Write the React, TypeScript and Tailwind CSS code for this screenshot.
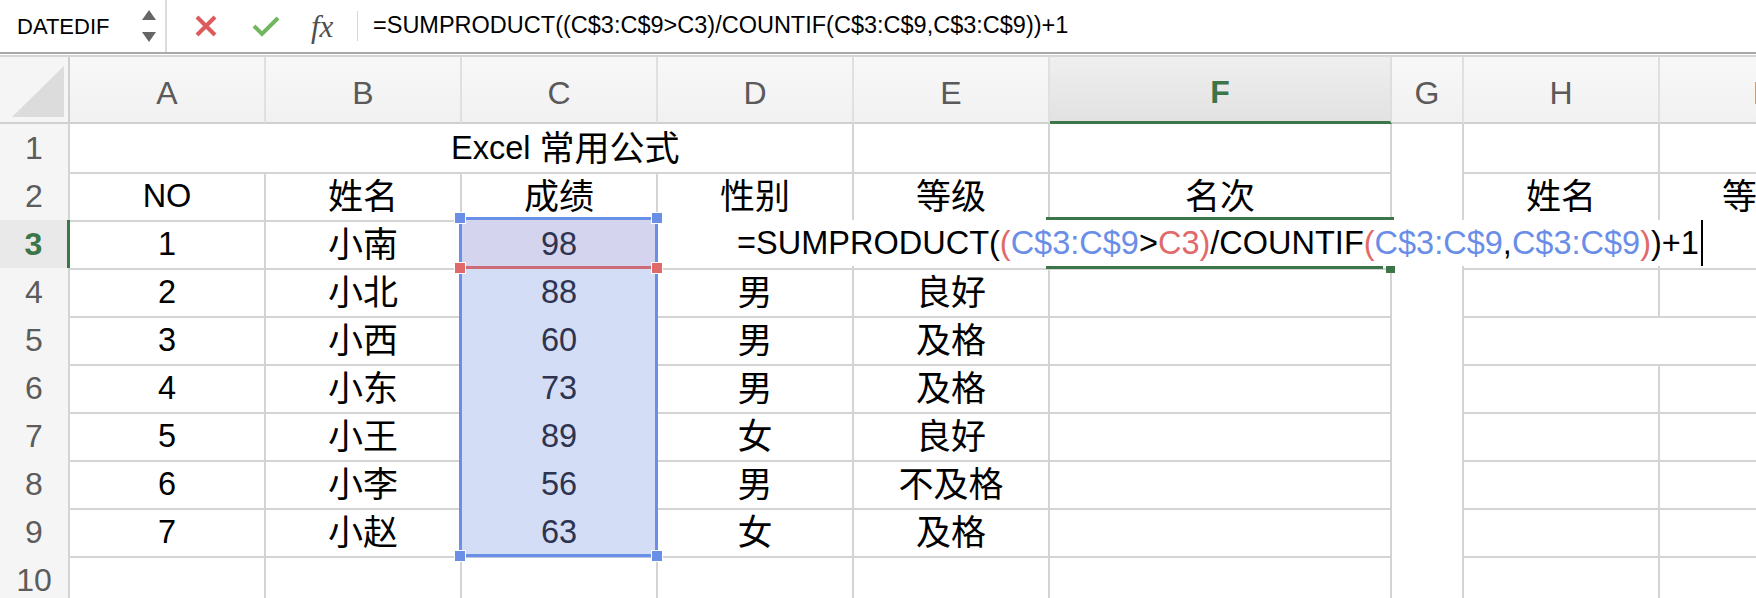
import React from 'react';

const FONT = "font-['Liberation_Sans','Noto_Sans_CJK_SC',sans-serif]";
const GRID =
  'grid grid-cols-[70px_196px_196px_196px_196px_196px_342px_72px_196px_196px]';

const isCJK = (s: string) => /[\u4e00-\u9fff]/.test(s);

function Txt({ s }: { s: string }) {
  return (
    <span className={`${isCJK(s) ? 'text-[35px]' : 'text-[32.5px]'} leading-none`}>
      {s}
    </span>
  );
}

interface CellProps {
  children?: React.ReactNode;
  noBottom?: boolean;
  sel?: 'first' | 'rest';
  span?: string;
  className?: string;
}

// one cell of the sheet; gridlines are the right/bottom borders
function Cell({ children, noBottom, sel, span = '', className = '' }: CellProps) {
  const tone = sel
    ? `${sel === 'first' ? 'bg-[#d5d4ee]' : 'bg-[#d4ddf6]'} border-[#b9c4de] text-[#2e3450]`
    : 'border-[#d4d4d4] text-black';
  return (
    <div
      className={`flex items-center overflow-hidden whitespace-nowrap border-r-2 ${
        noBottom ? '' : 'border-b-2'
      } ${tone} ${span} ${className || 'justify-center'}`}
    >
      {children}
    </div>
  );
}

function RowHead({ n, active }: { n: number; active?: boolean }) {
  return active ? (
    <div className="flex items-center justify-center border-b-2 border-r-[3px] border-b-[#d4d4d4] border-r-[#3b7548] bg-[#e9e9e9] text-[32px] font-bold text-[#3b7548]">
      {n}
    </div>
  ) : (
    <div className="flex items-center justify-center border-b-2 border-r-2 border-[#d4d4d4] bg-[#f5f5f5] text-[32px] text-[#5c5c5c]">
      {n}
    </div>
  );
}

const data = [
  ['2', '小北', '88', '男', '良好'],
  ['3', '小西', '60', '男', '及格'],
  ['4', '小东', '73', '男', '及格'],
  ['5', '小王', '89', '女', '良好'],
  ['6', '小李', '56', '男', '不及格'],
  ['7', '小赵', '63', '女', '及格'],
];

const formula: [string, 'k' | 'r' | 'b'][] = [
  ['=SUMPRODUCT(', 'k'],
  ['(', 'r'],
  ['C$3:C$9', 'b'],
  ['>', 'k'],
  ['C3', 'r'],
  [')', 'r'],
  ['/COUNTIF', 'k'],
  ['(', 'r'],
  ['C$3:C$9', 'b'],
  [',', 'k'],
  ['C$3:C$9', 'b'],
  [')', 'r'],
  [')+1', 'k'],
];

const tokenColor = { k: 'text-black', r: 'text-[#e06a6a]', b: 'text-[#6a8ee8]' };

function FormulaBar() {
  return (
    <div className="flex h-[52px] items-center bg-white">
      <div className="flex h-full w-[167px] items-center border-r-2 border-[#dcdcdc] pl-[17px] pr-[9px]">
        <span className="flex-1 text-[22px] text-black">DATEDIF</span>
        <svg width="14" height="34" viewBox="0 0 14 34">
          <polygon points="0,11 7,1 14,11" fill="#666" />
          <polygon points="0,23 14,23 7,33" fill="#666" />
        </svg>
      </div>
      <svg className="ml-[28px]" width="22" height="22" viewBox="0 0 22 22">
        <path d="M2 2 L20 20 M20 2 L2 20" stroke="#dc5b5b" strokeWidth="4" />
      </svg>
      <svg className="ml-[35px]" width="28" height="22" viewBox="0 0 28 22">
        <path d="M2 11 L10 19 L26 3" stroke="#72b65f" strokeWidth="4" fill="none" />
      </svg>
      <span className="ml-[31px] w-[30px] font-['Liberation_Serif',serif] text-[31px] italic leading-none text-[#4f4f4f]">
        fx
      </span>
      <div className="ml-[16px] h-[30px] w-px bg-[#d6d6d6]" />
      <span className="ml-[15px] text-[23.5px] text-black">
        =SUMPRODUCT((C$3:C$9&gt;C3)/COUNTIF(C$3:C$9,C$3:C$9))+1
      </span>
    </div>
  );
}

function ColumnHeader() {
  const cols = ['A', 'B', 'C', 'D', 'E', 'F', 'G', 'H', 'I'];
  return (
    <div className={`${GRID} h-[67px]`}>
      <div className="relative border-b-2 border-r-2 border-[#d0d0d0] bg-[#f5f5f5]">
        <svg className="absolute left-0 top-0" width="68" height="65" viewBox="0 0 68 65">
          <polygon points="12,60 64,60 64,9" fill="#dcdcdc" />
        </svg>
      </div>
      {cols.map((c) =>
        c === 'F' ? (
          <div
            key={c}
            className="flex items-center justify-center border-b-[3px] border-r-2 border-b-[#3b7548] border-r-[#dedede] bg-linear-to-b from-[#efefef] to-[#e2e2e2] pt-[6px] text-[32px] font-bold text-[#3b7548]"
          >
            {c}
          </div>
        ) : (
          <div
            key={c}
            className="flex items-center justify-center border-b-2 border-r-2 border-b-[#cfcfcf] border-r-[#e0e0e0] bg-linear-to-b from-[#f8f8f8] to-[#f1f1f1] pt-[6px] text-[32px] text-[#5a5a5a]"
          >
            {c}
          </div>
        )
      )}
    </div>
  );
}

function Overlays() {
  return (
    <>
      {/* selected range C3:C9 */}
      <div className="absolute left-[459px] top-[217px] h-[340px] w-[199px] border-[3px] border-[#6a8fe6]" />
      <div className="absolute left-[459px] top-[266px] h-[3px] w-[199px] bg-[#cf6b76]" />
      <div className="absolute left-[454px] top-[212px] h-[12px] w-[12px] border border-white bg-[#6a8fe6]" />
      <div className="absolute left-[651px] top-[212px] h-[12px] w-[12px] border border-white bg-[#6a8fe6]" />
      <div className="absolute left-[454px] top-[262px] h-[12px] w-[12px] border border-white bg-[#e06a6a]" />
      <div className="absolute left-[651px] top-[262px] h-[12px] w-[12px] border border-white bg-[#e06a6a]" />
      <div className="absolute left-[454px] top-[550px] h-[12px] w-[12px] border border-white bg-[#6a8fe6]" />
      <div className="absolute left-[651px] top-[550px] h-[12px] w-[12px] border border-white bg-[#6a8fe6]" />

      {/* active cell F3 */}
      <div className="absolute left-[1046px] top-[217px] h-[3px] w-[348px] bg-[#3b7548]" />
      <div className="absolute left-[1046px] top-[266px] h-[3px] w-[337px] bg-[#3b7548]" />
      <div className="absolute left-[1386px] top-[265px] h-[8px] w-[9px] bg-[#3b7548]" />

      {/* in-cell editor */}
      <div className="absolute left-[662px] top-[220px] flex h-[46px] w-[1116px] items-center justify-center whitespace-nowrap bg-white text-[32.5px] leading-none">
        {formula.map(([t, c], i) => (
          <span key={i} className={tokenColor[c]}>
            {t}
          </span>
        ))}
        <span className="ml-[2px] inline-block h-[46px] w-[2px] bg-black" />
      </div>
    </>
  );
}

export default function App() {
  return (
    <div className={`relative h-[598px] w-[1756px] overflow-hidden bg-white ${FONT}`}>
      <FormulaBar />
      <div className="h-[2px] bg-[#a9a9a9]" />
      <div className="h-px bg-white" />
      <div className="h-[2px] bg-[#d6d6d6]" />
      <ColumnHeader />

      {/* row 1 */}
      <div className={`${GRID} h-[48px]`}>
        <RowHead n={1} />
        <Cell span="col-span-4" className="justify-start pl-[381px]">
          <span className="text-[32.5px] leading-none">Excel&nbsp;</span>
          <span className="text-[35px] leading-none">常用公式</span>
        </Cell>
        <Cell />
        <Cell />
        <Cell noBottom />
        <Cell />
        <Cell />
      </div>

      {/* row 2 */}
      <div className={`${GRID} h-[48px]`}>
        <RowHead n={2} />
        {['NO', '姓名', '成绩', '性别', '等级', '名次'].map((s) => (
          <Cell key={s}>
            <Txt s={s} />
          </Cell>
        ))}
        <Cell noBottom />
        <Cell>
          <Txt s="姓名" />
        </Cell>
        <Cell>
          <Txt s="等级" />
        </Cell>
      </div>

      {/* row 3 */}
      <div className={`${GRID} h-[48px]`}>
        <RowHead n={3} active />
        <Cell>
          <Txt s="1" />
        </Cell>
        <Cell>
          <Txt s="小南" />
        </Cell>
        <Cell sel="first">
          <Txt s="98" />
        </Cell>
        <Cell />
        <Cell />
        <Cell />
        <Cell noBottom />
        <Cell />
        <Cell />
      </div>

      {data.map((r, i) => (
        <div key={r[0]} className={`${GRID} h-[48px]`}>
          <RowHead n={i + 4} />
          <Cell>
            <Txt s={r[0]} />
          </Cell>
          <Cell>
            <Txt s={r[1]} />
          </Cell>
          <Cell sel="rest">
            <Txt s={r[2]} />
          </Cell>
          <Cell>
            <Txt s={r[3]} />
          </Cell>
          <Cell>
            <Txt s={r[4]} />
          </Cell>
          <Cell />
          <Cell noBottom />
          {i === 1 ? (
            <Cell span="col-span-2" />
          ) : (
            <>
              <Cell />
              <Cell />
            </>
          )}
        </div>
      ))}

      {/* row 10 */}
      <div className={`${GRID} h-[48px]`}>
        <RowHead n={10} />
        <Cell />
        <Cell />
        <Cell />
        <Cell />
        <Cell />
        <Cell />
        <Cell noBottom />
        <Cell />
        <Cell />
      </div>

      <Overlays />
    </div>
  );
}
